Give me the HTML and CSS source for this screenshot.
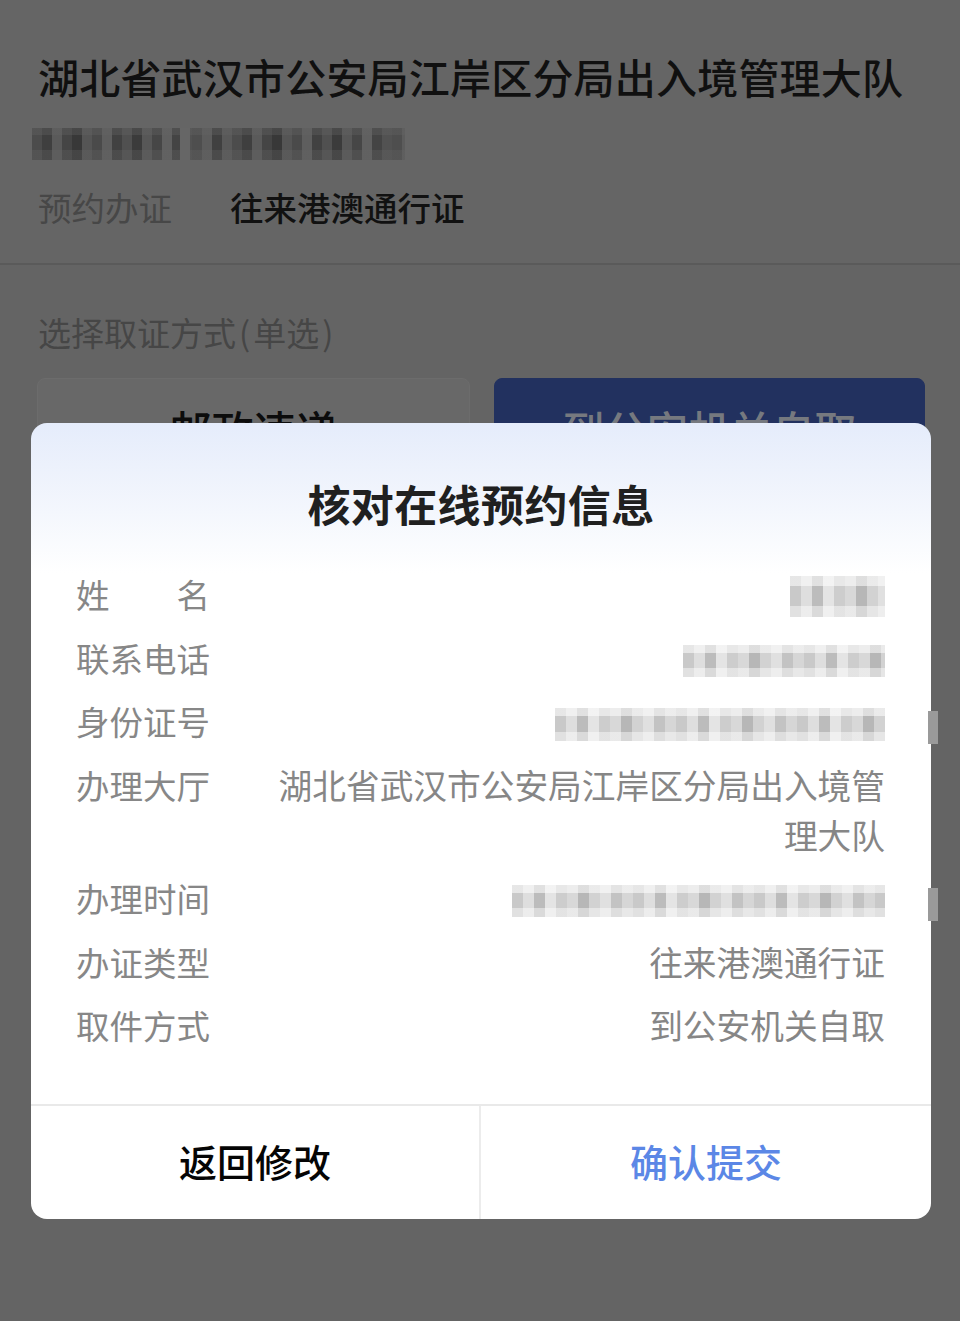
FILE: index.html
```html
<!DOCTYPE html>
<html lang="zh-CN">
<head>
<meta charset="utf-8">
<title>核对在线预约信息</title>
<link rel="stylesheet" href="styles.css">
</head>
<body>
<div class="page">
  <header class="office">
    <h1 class="office-name">湖北省武汉市公安局江岸区分局出入境管理大队</h1>
    <div class="mosaic mosaic-dark office-time"></div>
    <div class="office-meta">
      <span class="meta-label">预约办证</span>
      <span class="meta-value">往来港澳通行证</span>
    </div>
  </header>
  <section class="pickup">
    <div class="pickup-title">选择取证方式<span class="paren">(</span>单选<span class="paren">)</span></div>
    <div class="pickup-options">
      <div class="option">邮政速递</div>
      <div class="option option-active">到公安机关自取</div>
    </div>
  </section>
</div>

<div class="dialog">
  <div class="dialog-head">
    <h2 class="dialog-title">核对在线预约信息</h2>
  </div>
  <div class="dialog-body">
    <div class="row">
      <div class="label label-spread"><span>姓</span><span>名</span></div>
      <div class="value"><span class="mosaic mosaic-light m-name"></span></div>
    </div>
    <div class="row">
      <div class="label">联系电话</div>
      <div class="value"><span class="mosaic mosaic-light m-phone"></span></div>
    </div>
    <div class="row">
      <div class="label">身份证号</div>
      <div class="value"><span class="mosaic mosaic-light m-id"></span></div>
    </div>
    <div class="row">
      <div class="label">办理大厅</div>
      <div class="value">湖北省武汉市公安局江岸区分局出入境管理大队</div>
    </div>
    <div class="row">
      <div class="label">办理时间</div>
      <div class="value"><span class="mosaic mosaic-light m-time"></span></div>
    </div>
    <div class="row">
      <div class="label">办证类型</div>
      <div class="value">往来港澳通行证</div>
    </div>
    <div class="row">
      <div class="label">取件方式</div>
      <div class="value">到公安机关自取</div>
    </div>
  </div>
  <div class="dialog-foot">
    <div class="btn btn-back">返回修改</div>
    <div class="btn btn-confirm">确认提交</div>
  </div>
</div>

<div class="scroll-mark mark-1"></div>
<div class="scroll-mark mark-2"></div>
</body>
</html>
```

FILE: styles.css
```css
html, body {
  margin: 0;
  padding: 0;
  background: #646464;
}
body {
  width: 960px;
  height: 1321px;
  overflow: hidden;
  position: relative;
  font-family: "Noto Sans CJK SC", "Noto Sans", sans-serif;
}

/* underlying page (dimmed by mask) */
.office {
  padding: 48px 38px 32px 38px;
  border-bottom: 2px solid #5a5a5a;
  background: #656565;
}
.office-name {
  margin: 0;
  font-size: 41px;
  line-height: 56px;
  font-weight: 500;
  color: #101010;
  white-space: nowrap;
  letter-spacing: 0.2px;
}
.office-time {
  display: block;
  margin: 24px 0 0 -6px;
  width: 373px;
  height: 32px;
}
.office-meta {
  margin-top: 23px;
  display: flex;
  align-items: center;
  font-size: 33.5px;
  line-height: 48px;
}
.meta-label {
  color: #474747;
  width: 192px;
}
.meta-value {
  color: #111;
  font-weight: 500;
}

.pickup {
  padding: 45px 35px 0 37px;
}
.pickup-title {
  font-size: 33px;
  line-height: 44px;
  color: #464646;
  margin-left: 1px;
}
.paren {
  display: inline-block;
  margin: 0 3px;
}
.pickup-options {
  margin-top: 24px;
  display: grid;
  grid-template-columns: 433px 431px;
  column-gap: 24px;
}
.option {
  height: 100px;
  border-radius: 8px;
  background: #686868;
  border: 1px solid #6c6c6c;
  box-sizing: border-box;
  display: flex;
  align-items: center;
  justify-content: center;
  font-size: 42px;
  color: #0c0c0c;
  font-weight: 500;
}
.option-active {
  background: #22315f;
  border-color: #22315f;
  color: #76797f;
}

/* mosaics (blurred personal data) */
.mosaic {
  display: inline-block;
  vertical-align: middle;
}
.mosaic-dark {
  background:
    linear-gradient(90deg, transparent 0 148px, #666 148px 158px, transparent 158px),
    linear-gradient(180deg, rgba(100,100,100,.35) 0 22%, transparent 22% 70%, rgba(100,100,100,.3) 70%),
    repeating-linear-gradient(90deg,
      #4c4c4c 0 10px, #3f3f3f 10px 20px, #5a5a5a 20px 30px, #454545 30px 40px,
      #383838 40px 50px, #555 50px 60px, #4a4a4a 60px 70px, #5e5e5e 70px 80px,
      #414141 80px 90px, #505050 90px 100px, #3b3b3b 100px 110px, #575757 110px 120px,
      #464646 120px 130px, #606060 130px 140px, #444 140px 150px, #525252 150px 160px,
      #4e4e4e 160px 170px, #5c5c5c 170px 180px, #404040 180px 190px, #595959 190px 200px);
}
.mosaic-light {
  background:
    linear-gradient(180deg, rgba(255,255,255,.55) 0 25%, transparent 25% 72%, rgba(255,255,255,.45) 72%),
    repeating-linear-gradient(90deg,
      #c9c9c9 0 11px, #dedede 11px 22px, #bcbcbc 22px 33px, #e4e4e4 33px 44px,
      #cdcdcd 44px 55px, #d8d8d8 55px 66px, #b7b7b7 66px 77px, #d2d2d2 77px 88px,
      #e0e0e0 88px 99px, #c3c3c3 99px 110px, #d6d6d6 110px 121px);
}
.m-name { width: 95px; height: 41px; }
.m-phone { width: 202px; height: 32px; }
.m-id { width: 330px; height: 33px; }
.m-time { width: 373px; height: 32px; }

/* dialog */
.dialog {
  position: absolute;
  left: 31px;
  top: 423px;
  width: 900px;
  height: 796px;
  border-radius: 16px;
  overflow: hidden;
  background: linear-gradient(180deg, #e5ecfb 0, #f4f7fd 90px, #ffffff 150px, #ffffff 100%);
  display: flex;
  flex-direction: column;
}
.dialog-head {
  padding-top: 50px;
  height: 96px;
}
.dialog-title {
  margin: 0;
  text-align: center;
  font-size: 43px;
  line-height: 60px;
  font-weight: 700;
  color: #202020;
  letter-spacing: 0.4px;
}
.dialog-body {
  flex: 1;
  padding: 0 46px 0 45px;
  display: flex;
  flex-direction: column;
  gap: 13.5px;
}
.row {
  display: grid;
  grid-template-columns: 198px 1fr;
  font-size: 33.5px;
  line-height: 50px;
  color: #878787;
}
.label {
  width: 134px;
  white-space: nowrap;
}
.label-spread {
  display: flex;
  justify-content: space-between;
}
.value {
  text-align: right;
  color: #868686;
  font-size: 33.7px;
}
.value .mosaic {
  vertical-align: middle;
  position: relative;
  top: -2px;
}
.dialog-foot {
  height: 115px;
  border-top: 2px solid #e9e9e9;
  box-sizing: border-box;
  display: grid;
  grid-template-columns: 450px 1fr;
}
.btn {
  display: flex;
  align-items: center;
  justify-content: center;
  font-size: 38px;
  font-weight: 500;
  padding-bottom: 5px;
}
.btn-back {
  color: #050505;
  border-right: 2px solid #ececec;
}
.btn-confirm {
  color: #5b87e6;
}

.scroll-mark {
  position: absolute;
  left: 928px;
  width: 10px;
  height: 33px;
  background: #9a9a9a;
}
.mark-1 { top: 711px; }
.mark-2 { top: 888px; }
```
